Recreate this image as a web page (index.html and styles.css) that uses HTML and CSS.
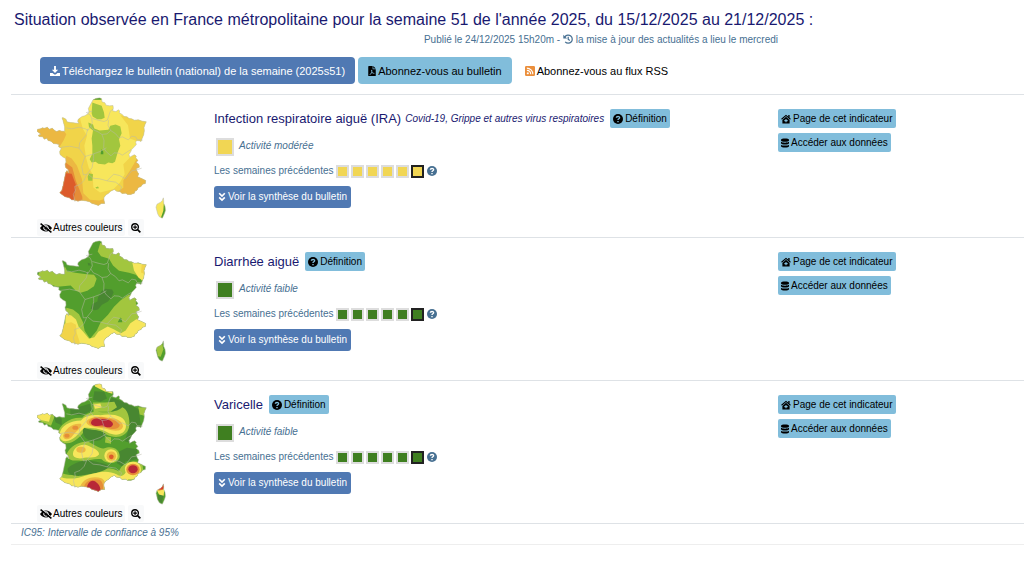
FILE: index.html
```html
<!DOCTYPE html>
<html lang="fr">
<head>
    <meta charset="UTF-8">
    <meta name="viewport" content="width=device-width, initial-scale=1.0">
    <title>Situation observée en France métropolitaine</title>
    <link rel="stylesheet" href="styles.css">
</head>
<body>
    <!-- Shared icons and map outline -->
    <svg class="defs" aria-hidden="true">
        <defs>
            <symbol id="i-download" viewBox="0 0 16 16">
                <path d="M6.500 0h3v6H13L8 11 3 6h3.500zM0 11h4l3 2.500h2L12 11h4v5H0z"/>
            </symbol>
            <symbol id="i-pdf" viewBox="0 0 12 16">
                <path fill-rule="evenodd" d="M1 0h6v5h5v10.500q0 .5-.5.5h-11q-.5 0-.5-.5V1q0-1 1-1zM8 0l4 4H8zM5 6c-.8 1-.2 2.500.2 3.300L3.800 12C2 13 1.800 14 2.500 14.200c.8.2 1.500-1 2-1.800l2.700-.7c1 .8 2.500 1 2.700.2.200-.8-1.200-1-2.200-.9L6.300 9.300C6.800 7.500 6.500 6 5 6zm.8 4.400l.9 1-1.600.4z"/>
            </symbol>
            <symbol id="i-rss" viewBox="0 0 16 16">
                <path fill-rule="evenodd" d="M2 0h12q2 0 2 2v12q0 2-2 2H2q-2 0-2-2V2q0-2 2-2zm2.500 10a1.700 1.700 0 1 0 .01 0zM3 6v1.800A5.500 5.500 0 0 1 8.300 13H10A7.200 7.200 0 0 0 3 6zm0-3.500v1.700A9 9 0 0 1 11.700 13h1.700A10.600 10.600 0 0 0 3 2.500z"/>
            </symbol>
            <symbol id="i-history" viewBox="0 0 16 16">
                <path fill="none" stroke="currentColor" stroke-width="2" d="M3 4.500A6.500 6.500 0 1 1 3.500 12.700M8.300 4.500v4l2.500 2"/>
                <path d="M.5 1v6h6z"/>
            </symbol>
            <symbol id="i-question" viewBox="0 0 16 16">
                <circle cx="8" cy="8" r="8" stroke="none"/>
                <path fill="none" stroke-width="2.200" d="M5.300 6C5.600 3.200 10.700 3.300 10.600 6 10.500 7.700 8 7.600 8 9.600M8 11v2.200"/>
            </symbol>
            <symbol id="i-eye" viewBox="0 0 20 16">
                <path fill-rule="evenodd" d="M0 8C2 4.500 6 2 10 2s8 2.500 10 6c-2 3.500-6 6-10 6S2 11.500 0 8zm10-4.500a4.500 4.500 0 1 0 .01 0zM10 5a3 3 0 1 1-3 3c1.500.5 3-.5 3-3z"/>
                <path stroke="#f8f9fa" stroke-width="1.500" d="M3 0l17 14"/>
                <path stroke="currentColor" stroke-width="2.400" d="M1 .8l18 14.500"/>
            </symbol>
            <symbol id="i-zoom" viewBox="0 0 16 16">
                <circle cx="6.500" cy="6.500" r="5.300" fill="none" stroke="currentColor" stroke-width="2.200"/>
                <path stroke="currentColor" stroke-width="2.600" d="M10.500 10.500L15 15"/>
                <path stroke="currentColor" stroke-width="1.800" d="M3.500 6.500h6M6.500 3.500v6"/>
            </symbol>
            <symbol id="i-down" viewBox="0 0 12 16">
                <path fill="none" stroke="currentColor" stroke-width="2.600" d="M1.500 2L6 6.500 10.500 2M1.500 8.500L6 13l4.500-4.500"/>
            </symbol>
            <symbol id="i-house" viewBox="0 0 18 16">
                <path fill="none" stroke="currentColor" stroke-width="2" d="M1 8.500L9 1.500l8 7"/>
                <path fill-rule="evenodd" d="M9 4l6.500 5.700V16h-13V9.700zM8 8v2H6v2h2v2h2v-2h2v-2h-2V8z"/>
                <path d="M13 1h2.500v5L13 4z"/>
            </symbol>
            <symbol id="i-data" viewBox="0 0 14 16">
                <path d="M0 2.500C0-.8 14-.8 14 2.500v1c0 3-14 3-14 0zM0 6c2 2 12 2 14 0v2.500c0 3-14 3-14 0zM0 11c2 2 12 2 14 0v2.500c0 3.300-14 3.300-14 0z"/>
            </symbol>

            <path id="france" d="M218 20l8-4 12-2 6 3 1 9 9 3 3 7 11 2 10-1 1 8-2 8 10 2 7-5 4 3-1 6 9 5 5 6 9 1 6 5 8 1 8 4 12-1 12 4 12 2-4 8-3 9 1 10-2 12-5 12-3 8-5-2-8-1-3 5 2 7-6 7-8 8-3 7-5 8 2 8 11-6 4-1 5 4-2 5 7 8-6 5 9 7 1 8-10 5 4 9 4 6-3 9 12 5 12 6-1 9-8 2-5 7-8 3-4 8-6 3-2 6-11 4-9 0-6-4-11 1-6-6-10-1-7-5-11 5-7 7-7 4-6 8 0 8 2 10-10 0-9 6-10-4-9-2-7-5-13-3-12-2-10 3-9-3-10-1-7-6-13-3-8-6-8-6 6-6 4-15 5-24 3-16 4-6 5 7-1-9-8-7-2-10 3-6-1-11-9-5-8-7-1-9 5-9-8-5 1-7-9-2-8-1-7-7-9-2-3-7-8 3-5-7-11-1-2-4 8-3-7-5-5-4 2-6 9-1 5-3 7 1 8-3 6 6 9-3 6 6 6 4 9-3 8 2 8 0 0-13-3-11-2-8-3-8 4 0 8 4 3 8 10 2 10 1 8 1 8 0-4-6 2-6 11-8 8-2 10-6 3-6-2-10zM429 314l1 8 0 8 4 9 2 12-4 11-6 13-9-4-5-9-2-8-3-12 3-9 11-6 5-5z"/>
            <clipPath id="land"><use href="#france"/></clipPath>
            <g id="regions" fill="none" stroke="#b9b9a8" stroke-width="1.500">
                <use href="#france"/>
                <path d="M138 104l16 3 22-5 19 5 8 5 8-13 5-10-2-13-4-10-12-8 18-4M216 76l17 5 18 4 10-4 4-12 5-15 8-6M265 81l-2 16 8 15 14 9 11 13 10-3 18 9 10-11 12 2 4 8 17 2M211 98l8 12 14 6 12 8 15-2 11-10M245 124l6 18-1 22 8 12 14 12 9-9 15 1 10 6 18-12 8-5M202 107l-4 18-20 24-2 16-28-6-28 4M176 165l18 25 26-8 19-7 19-11M194 190l-10 30 5 25 10-1 16-20 5-28 0-14M199 244l-8 18-12 12-16 6 2 12-6 12 5 22M260 263l-22-6-20-2-15-12M260 263l20-20 18 4 17 10 10-12 9-12 13-2 17-6M260 263l26 4 18 14-6 14"/>
            </g>
        </defs>
    </svg>

    <main>
        <header>
            <h1>Situation observée en France métropolitaine pour la semaine 51 de l'année 2025, du 15/12/2025 au 21/12/2025 :</h1>
            <p class="published">Publié le 24/12/2025 15h20m - <svg class="icon"><use href="#i-history"/></svg> la mise à jour des actualités a lieu le mercredi</p>
            <nav class="actions">
                <a href="#" class="btn btn-lg btn-dark"><svg class="icon"><use href="#i-download"/></svg> Téléchargez le bulletin (national) de la semaine (2025s51)</a>
                <a href="#" class="btn btn-lg btn-light"><svg class="icon icon-narrow"><use href="#i-pdf"/></svg>Abonnez-vous au bulletin</a>
                <a href="#" class="btn btn-lg rss"><svg class="icon"><use href="#i-rss"/></svg> Abonnez-vous au flux RSS</a>
            </nav>
        </header>

        <section class="indicator">
            <div class="map">
                <svg class="france" viewBox="50 10 390 366" role="img" aria-label="Carte Infection respiratoire aiguë">
                    <g clip-path="url(#land)">
                        <path fill="#f7e65b" d="M40 0h410v390H40z"/>
                        <path fill="#f1d449" d="M50 50h130v30l8 28 12 20-8 30 5 35 8 30 12 20 2 40 20 15 40-10 20-20 14-25-4-30 20-20 30-20 40 0v170H50z"/>
                        <path fill="#f1d449" d="M300 66l80 10-6 68-20 2-25-10-6-40z"/>
                        <path fill="#ecb842" d="M50 85l70 14 18 24-8 18-12 20-68-10zM138 188l16 8 16 22 15 40 4 42 20 20 28 2 18-5 0 30H110zM350 195l20 45 20 30-30 60-80-18 4-12 25-16 0-22 20-30 12-20z"/>
                        <path fill="#e58d38" d="M136 208l20 15 10 38 10 25 10 25 0 28-70-22z"/>
                        <path fill="#dc5b2b" d="M136 240l18 2 12 32-2 22-5 29-50-15z"/>
                        <path fill="#a2c63e" d="M216 28l10 4 18 6 7 20 2 16-10 4-12 0-14-8-3-10zM204 88l14 6 4 12 16 6 26-2 6-12 16-4 14 6 4 20-8 18 4 20-8 20-8 28-8 4-12-2-10 6-20-2-8-6-12 2-6-10 8-16 0-24-2-22 4-24-12-10zM206 240l12 3-2 20-12 0-2-12zM225 283l8-3 3 5-8 1z"/>
                        <path fill="#529e2d" d="M218 12h26v8h-28zM50 96h10v10H50zM244 168l5 8 0 7-8 0 1-9zM432 310l8 40-12 28-6-5 7-20z"/>
                    </g>
                    <use href="#regions"/>
                </svg>
                <div class="map-tools">
                    <button type="button"><svg class="icon icon-wide"><use href="#i-eye"/></svg> Autres couleurs</button>
                    <button type="button" aria-label="Agrandir la carte"><svg class="icon"><use href="#i-zoom"/></svg></button>
                </div>
            </div>
            <div class="details">
                <h2>Infection respiratoire aiguë (IRA) <em>Covid-19, Grippe et autres virus respiratoires</em>
                    <button type="button" class="btn btn-light"><svg class="icon icon-question"><use href="#i-question"/></svg> Définition</button></h2>
                <p class="activity"><span class="swatch moderate"></span><em>Activité modérée</em></p>
                <div class="weeks">Les semaines précédentes
                    <span class="history moderate"><i></i><i></i><i></i><i></i><i></i><i class="current"></i></span>
                    <svg class="icon help"><use href="#i-question"/></svg></div>
                <button type="button" class="btn btn-dark btn-summary"><svg class="icon icon-narrow"><use href="#i-down"/></svg> Voir la synthèse du bulletin</button>
            </div>
            <div class="links">
                <a href="#" class="btn btn-light"><svg class="icon"><use href="#i-house"/></svg> Page de cet indicateur</a>
                <a href="#" class="btn btn-light"><svg class="icon icon-narrow"><use href="#i-data"/></svg> Accéder aux données</a>
            </div>
        </section>

        <section class="indicator">
            <div class="map">
                <svg class="france" viewBox="50 10 390 366" role="img" aria-label="Carte Diarrhée aiguë">
                    <g clip-path="url(#land)">
                        <path fill="#529e2d" d="M40 0h410v390H40z"/>
                        <path fill="#a2c63e" d="M240 20l50 20 100 50-10 60-10-5-8-15-16-14-20-6-30-6-18-16-12-20-24-8-10-14zM62 96l74-2 4 11 25 5 34 4 22 2 8 12-8 22-20 14-20 6-16-8-14-14-24 2-15 2-65-20zM138 215l20 5 18 14 12 24 5 26 16 24 20-24 12-26 22-22 18-24 20-20 24-16 24 0 8 25 8 20 5 24 20 50-80 60H120z"/>
                        <path fill="#f7e65b" d="M336 80l50 5-16 50-15-10-14-22zM135 233l18 5 14 12 8 22 13 14 18 22 16-5 12-16 28-16 18 8 22 12 14-8 14-22 18-12 20 0 40 15-70 80-80 10-120 10z"/>
                        <path fill="#f1d449" d="M364 86l20-2-10 30-12-5zM133 262l20-4 14 8 2 24 8 24 4 20-70-20z"/>
                        <path fill="#488731" d="M243 165l12-7 20 2 5 8-5 12-12 16-18 10-12 14-10 2-12-4 4-14 16-8 2-12zM202 80l8 2 2 6-8 0z"/>
                        <path fill="#529e2d" d="M346 186l8 8 6 10-6 6-7-5zM300 244l4 4 2 10-14 0z"/>
                        <path fill="#a2c63e" d="M405 320l20-2 4 22-8 22-8-2z"/>
                    </g>
                    <use href="#regions"/>
                </svg>
                <div class="map-tools">
                    <button type="button"><svg class="icon icon-wide"><use href="#i-eye"/></svg> Autres couleurs</button>
                    <button type="button" aria-label="Agrandir la carte"><svg class="icon"><use href="#i-zoom"/></svg></button>
                </div>
            </div>
            <div class="details">
                <h2>Diarrhée aiguë
                    <button type="button" class="btn btn-light"><svg class="icon icon-question"><use href="#i-question"/></svg> Définition</button></h2>
                <p class="activity"><span class="swatch low"></span><em>Activité faible</em></p>
                <div class="weeks">Les semaines précédentes
                    <span class="history low"><i></i><i></i><i></i><i></i><i></i><i class="current"></i></span>
                    <svg class="icon help"><use href="#i-question"/></svg></div>
                <button type="button" class="btn btn-dark btn-summary"><svg class="icon icon-narrow"><use href="#i-down"/></svg> Voir la synthèse du bulletin</button>
            </div>
            <div class="links">
                <a href="#" class="btn btn-light"><svg class="icon"><use href="#i-house"/></svg> Page de cet indicateur</a>
                <a href="#" class="btn btn-light"><svg class="icon icon-narrow"><use href="#i-data"/></svg> Accéder aux données</a>
            </div>
        </section>

        <section class="indicator">
            <div class="map">
                <svg class="france" viewBox="50 10 390 366" role="img" aria-label="Carte Varicelle">
                    <g clip-path="url(#land)">
                        <path fill="#529e2d" d="M40 0h410v390H40z"/>
                        <path fill="#488731" d="M222 36l30 2 8 20-20 10-22-6zM275 56l40 14 40 20 8 60-12 20-16 22-22-6 10-30-6-30-30-20-24-22 2-16zM150 84l30-2 28-8 6 20-30 14-34-2zM100 110l24 8 0 20-18-8zM290 220l30-14 30 4 0 30-34 6-10 16-16-10z"/>
                        <path fill="#a2c63e" d="M60 90l34 2 8 22-10 26-46-20zM112 162C116 138 150 112 186 116C196 102 215 100 224 96C250 102 290 100 306 84C324 92 330 120 326 146C316 178 280 178 258 166C236 152 215 152 196 152C180 172 160 196 134 192C118 188 110 176 112 162zM218 70l36 0 28-2 8 16-20 14-50 0zM256 172l16 2 0 20-18-4zM354 84l26 2-8 24-14-4zM140 222C150 200 180 184 204 188C220 196 240 210 250 208C280 196 300 214 298 234C292 256 258 256 244 240C220 236 200 248 176 244C156 246 136 240 140 222zM110 276C150 296 190 286 220 276C250 266 270 262 296 276C306 250 336 240 366 252L372 300L330 340H110z"/>
                        <path fill="#488731" d="M190 145C210 156 236 148 256 164C250 184 230 190 204 182C190 174 184 158 190 145zM142 268C156 252 186 242 210 244C236 250 256 252 268 262C250 280 214 284 182 290C160 292 140 286 142 268zM414 345l16 2-6 26-14-14z"/>
                        <path fill="#f7e65b" d="M50 92l34 0 8 14-6 22-46-10zM118 165C120 140 150 124 182 124C192 110 215 106 240 108C275 102 317 108 317 140C316 168 285 172 262 160C240 148 215 146 192 146C175 162 160 186 135 186C122 185 116 175 118 165zM220 76l20-3 4 12-20 4zM158 222C160 205 180 192 200 198C215 205 238 212 236 226C225 240 205 232 192 236C178 240 156 238 158 222zM110 288C140 305 170 298 200 288C230 280 260 270 290 286C300 294 310 290 316 280C308 262 322 246 340 248C362 250 366 270 358 286C350 298 338 302 324 300L300 330H110zM222 12h20l12 16 22 6 0 10-24-8-28-14zM408 330l24-2-2 22-14-4z"/>
                        <ellipse fill="#f7e65b" cx="272" cy="230" rx="20" ry="20"/>
                        <path fill="#ecb842" d="M128 170C134 150 156 130 182 134C188 142 170 155 158 168C150 182 130 186 128 170zM198 128C205 112 240 110 262 116C285 116 308 126 308 142C304 158 280 156 262 150C240 144 200 146 198 128zM178 330C182 300 215 288 245 298C260 308 258 330 252 350L190 350z"/>
                        <ellipse fill="#ecb842" cx="182" cy="212" rx="14" ry="9"/>
                        <ellipse fill="#ecb842" cx="273" cy="231" rx="14" ry="14"/>
                        <path fill="#e58d38" d="M206 128C210 112 240 112 262 118C280 120 300 130 298 140C292 154 270 150 256 144C235 142 206 144 206 128zM190 330C192 304 214 298 238 302C252 312 250 330 244 350L194 350zM414 324l18-4-4 12-14 3z"/>
                        <ellipse fill="#e58d38" cx="165" cy="146" rx="9" ry="6"/>
                        <ellipse fill="#e58d38" cx="140" cy="170" rx="8" ry="6"/>
                        <ellipse fill="#e58d38" cx="338" cy="271" rx="20" ry="17"/>
                        <path fill="#b82737" d="M212 130C214 118 228 116 242 120C262 118 278 126 278 136C274 148 256 146 246 138C232 142 212 142 212 130zM200 340C196 312 212 300 224 306C240 318 242 325 240 350z"/>
                        <ellipse fill="#dc5b2b" cx="273" cy="233" rx="7" ry="7"/>
                        <ellipse fill="#b82737" cx="338" cy="270" rx="14" ry="12"/>
                        <path fill="#dc3b2b" d="M426 312h6v10l-4 8-14 2 2-8 10-2z"/>
                    </g>
                    <use href="#regions"/>
                </svg>
                <div class="map-tools">
                    <button type="button"><svg class="icon icon-wide"><use href="#i-eye"/></svg> Autres couleurs</button>
                    <button type="button" aria-label="Agrandir la carte"><svg class="icon"><use href="#i-zoom"/></svg></button>
                </div>
            </div>
            <div class="details">
                <h2>Varicelle
                    <button type="button" class="btn btn-light"><svg class="icon icon-question"><use href="#i-question"/></svg> Définition</button></h2>
                <p class="activity"><span class="swatch low"></span><em>Activité faible</em></p>
                <div class="weeks">Les semaines précédentes
                    <span class="history low"><i></i><i></i><i></i><i></i><i></i><i class="current"></i></span>
                    <svg class="icon help"><use href="#i-question"/></svg></div>
                <button type="button" class="btn btn-dark btn-summary"><svg class="icon icon-narrow"><use href="#i-down"/></svg> Voir la synthèse du bulletin</button>
            </div>
            <div class="links">
                <a href="#" class="btn btn-light"><svg class="icon"><use href="#i-house"/></svg> Page de cet indicateur</a>
                <a href="#" class="btn btn-light"><svg class="icon icon-narrow"><use href="#i-data"/></svg> Accéder aux données</a>
            </div>
        </section>

        <footer><em>IC95: Intervalle de confiance à 95%</em></footer>
    </main>
</body>
</html>
```
FILE: styles.css
```css
body {
    font-family: "Liberation Sans", Arial, sans-serif;
    font-size: 10px;
    line-height: 16px;
    color: #477092;
    background-color: #fff;
    margin: 0;
}
h1, h2, p {
    margin: 0;
    font-weight: normal;
}
button {
    font-family: inherit;
    cursor: pointer;
}
.defs {
    position: absolute;
    width: 0;
    height: 0;
}
.icon {
    width: 10px;
    height: 10px;
    flex: none;
    fill: currentColor;
    vertical-align: -1px;
}
.icon-narrow {
    width: 8px;
}
.icon-wide {
    width: 12px;
}
.icon-question {
    stroke: #81bddb;
}
.help {
    stroke: #fff;
}

/* Header */
header {
    padding-top: 8px;
}
h1 {
    padding-left: 14px;
    font-size: 16px;
    line-height: 24px;
    color: #191970;
}
.published {
    margin-left: 178px;
    text-align: center;
}
.actions {
    display: flex;
    gap: 3px;
    padding: 9px 0 10px 40px;
}

/* Buttons */
.btn {
    display: inline-flex;
    align-items: center;
    gap: 2px;
    box-sizing: border-box;
    height: 19px;
    padding: 0 3px;
    border: none;
    border-radius: 2px;
    font-size: 10px;
    line-height: 16px;
    white-space: nowrap;
    text-decoration: none;
    color: #000;
}
.btn-dark {
    background-color: #5079b3;
    color: #fff;
}
.btn-light {
    background-color: #81bddb;
}
.btn-lg {
    height: 27px;
    padding: 0 10px;
    border-radius: 4px;
    font-size: 11px;
}
.btn-summary {
    height: 22px;
    padding: 0 4px;
    border-radius: 3px;
}
.rss .icon {
    color: #eb8f3c;
}

/* Indicators */
.indicator {
    display: grid;
    grid-template-columns: 203px 1fr 246px;
    box-sizing: border-box;
    min-height: 143px;
    margin-left: 11px;
    border-top: 1px solid #dee2e6;
}
.map {
    padding: 1px 0 0 26px;
}
.france {
    display: block;
    width: 130px;
    height: 123px;
}
.map-tools {
    display: flex;
    gap: 3px;
}
.map-tools button {
    display: flex;
    align-items: center;
    gap: 1px;
    height: 17px;
    padding: 0 3px;
    border: none;
    border-radius: 2px;
    background-color: #f8f9fa;
    font-size: 10px;
    color: #000;
}
.details {
    padding-top: 14px;
}
h2 {
    display: flex;
    align-items: center;
    height: 19px;
    font-size: 13px;
    color: #191970;
}
h2 em {
    margin-left: 4px;
    font-size: 10px;
}
h2 .btn {
    margin-left: 6px;
}
.activity {
    display: flex;
    gap: 5px;
    margin-top: 10px;
    padding-left: 2px;
}
.swatch {
    box-sizing: border-box;
    width: 18px;
    height: 18px;
    border: 2px solid #ddd;
}
.weeks {
    display: flex;
    align-items: center;
    height: 16px;
    margin: 7px 0;
}
.history {
    display: flex;
    gap: 2px;
    margin: 0 3px 0 2px;
}
.history i {
    box-sizing: border-box;
    width: 13px;
    height: 13px;
    border: 2px solid #ddd;
}
.history .current {
    border: 2px solid #222;
}
.swatch.moderate, .moderate i {
    background-color: #f1d654;
}
.swatch.low, .low i {
    background-color: #3f7f20;
}
.links {
    display: flex;
    flex-direction: column;
    align-items: flex-start;
    gap: 5px;
    padding-top: 14px;
}

footer {
    margin-left: 11px;
    padding: 1px 10px 3px;
    border-top: 1px solid #dee2e6;
    border-bottom: 1px solid #eee;
}
```
